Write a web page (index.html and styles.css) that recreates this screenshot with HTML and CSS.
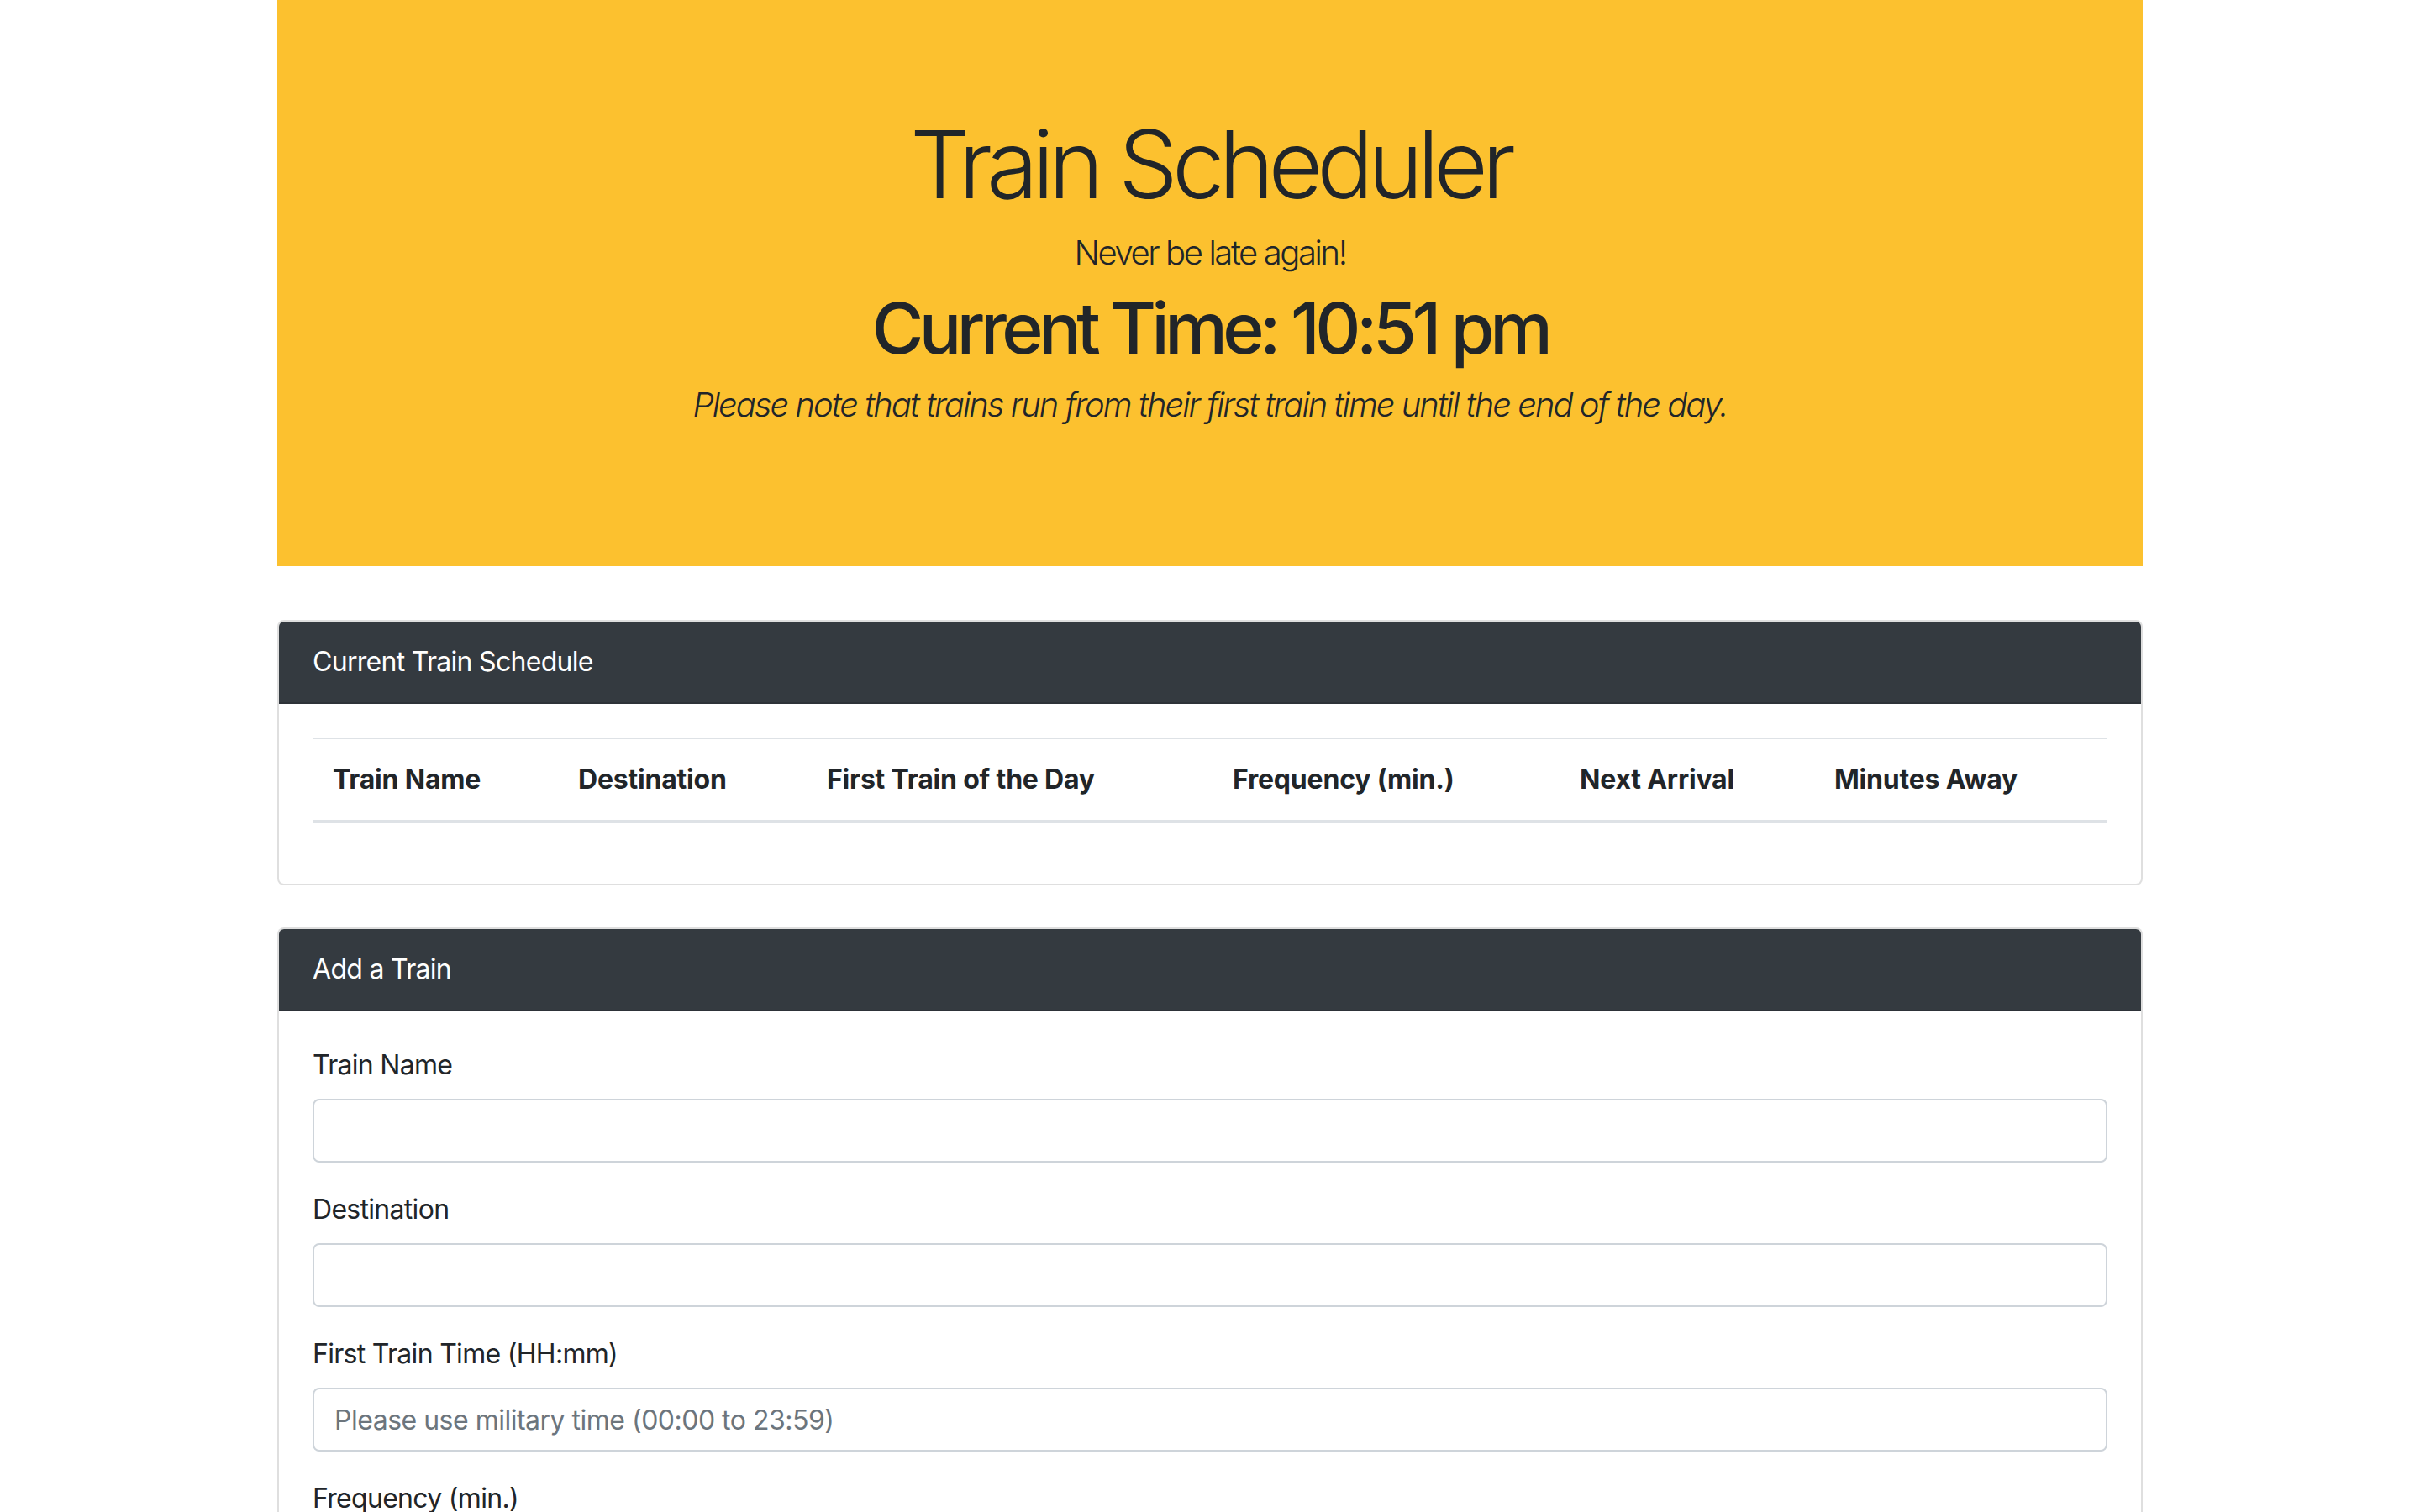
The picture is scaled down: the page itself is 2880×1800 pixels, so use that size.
FILE: index.html
```html
<!DOCTYPE html>
<html lang="en">
<head>
<meta charset="utf-8">
<title>Train Scheduler</title>
<link rel="stylesheet" href="styles.css">
</head>
<body>
<div class="container">
  <header class="hero">
    <h1 class="hero-title">Train Scheduler</h1>
    <p class="hero-lead">Never be late again!</p>
    <h2 class="hero-time">Current Time: 10:51 pm</h2>
    <p class="hero-note">Please note that trains run from their first train time until the end of the day.</p>
  </header>

  <section class="card card-schedule">
    <div class="card-header">Current Train Schedule</div>
    <div class="card-body">
      <table class="schedule">
        <thead>
          <tr>
            <th class="col-name">Train Name</th>
            <th class="col-dest">Destination</th>
            <th class="col-first">First Train of the Day</th>
            <th class="col-freq">Frequency (min.)</th>
            <th class="col-next">Next Arrival</th>
            <th class="col-away">Minutes Away</th>
          </tr>
        </thead>
        <tbody></tbody>
      </table>
    </div>
  </section>

  <section class="card card-form">
    <div class="card-header">Add a Train</div>
    <div class="card-body">
      <form class="train-form">
        <div class="form-group">
          <label class="form-label" for="train-name">Train Name</label>
          <input class="form-control" id="train-name" type="text">
        </div>
        <div class="form-group">
          <label class="form-label" for="destination">Destination</label>
          <input class="form-control" id="destination" type="text">
        </div>
        <div class="form-group">
          <label class="form-label" for="first-train">First Train Time (HH:mm)</label>
          <input class="form-control" id="first-train" type="text" placeholder="Please use military time (00:00 to 23:59)">
        </div>
        <div class="form-group">
          <label class="form-label" for="frequency">Frequency (min.)</label>
          <input class="form-control" id="frequency" type="text">
        </div>
        <button class="btn-submit" type="button">Submit</button>
      </form>
    </div>
  </section>
</div>
</body>
</html>
```
FILE: styles.css
```css
* { box-sizing: border-box; }

html, body {
  margin: 0;
  padding: 0;
}

body {
  background: #ffffff;
  color: #212529;
  font-family: Inter, "Noto Sans", "Liberation Sans", sans-serif;
  font-size: 32px;
  line-height: 1.5;
  letter-spacing: -0.7px;
}

.container {
  width: 2220px;
  margin: 0 auto;
}

/* Hero / jumbotron */
.hero {
  background: #fcc12f;
  padding: 128px 64px 162px;
  margin-bottom: 64px;
  text-align: center;
}

.hero-title {
  margin: 0 0 9px;
  font-size: 112px;
  font-weight: 300;
  line-height: 1.2;
  letter-spacing: -7px;
}

.hero-lead {
  margin: 0 0 10px;
  font-size: 40px;
  font-weight: 300;
  line-height: 1.5;
  letter-spacing: -2.4px;
}

.hero-time {
  margin: 0 0 10px;
  font-size: 84px;
  font-weight: 500;
  line-height: 1.2;
  letter-spacing: -5.5px;
}

.hero-note {
  margin: 0;
  font-size: 40px;
  font-weight: 300;
  font-style: italic;
  line-height: 1.5;
  letter-spacing: -2px;
}

/* Cards */
.card {
  border: 2px solid rgba(0, 0, 0, 0.125);
  border-radius: 8px;
  background: #ffffff;
  overflow: hidden;
}

.card-schedule {
  margin-bottom: 50px;
}

.card-header {
  background: #343a40;
  color: #ffffff;
  padding: 24px 40px;
  line-height: 48px;
  border-bottom: 2px solid rgba(0, 0, 0, 0.125);
}

.card-body {
  padding: 40px;
}

/* Schedule table */
.schedule {
  width: 100%;
  border-collapse: collapse;
  table-layout: fixed;
  margin-bottom: 32px;
}

.schedule th {
  padding: 24px;
  text-align: left;
  font-weight: 700;
  line-height: 48px;
  letter-spacing: -0.2px;
  vertical-align: bottom;
  border-top: 2px solid #dee2e6;
  border-bottom: 4px solid #dee2e6;
  white-space: nowrap;
}

.col-name { width: 292px; }
.col-dest { width: 296px; }
.col-first { width: 483px; }
.col-freq { width: 413px; }
.col-next { width: 303px; }
.col-away { width: auto; }

/* Form */
.form-group {
  margin-bottom: 32px;
}

.form-label {
  display: block;
  margin-bottom: 16px;
  line-height: 48px;
}

.form-control {
  display: block;
  width: 100%;
  height: 76px;
  padding: 12px 24px;
  font-family: inherit;
  font-size: 32px;
  line-height: 48px;
  letter-spacing: -0.5px;
  color: #495057;
  background: #ffffff;
  border: 2px solid #ced4da;
  border-radius: 8px;
  outline: none;
}

.form-control::placeholder {
  color: #6c757d;
  opacity: 1;
}

.btn-submit {
  font-family: inherit;
  font-size: 32px;
  line-height: 48px;
  padding: 12px 24px;
  color: #ffffff;
  background: #343a40;
  border: 2px solid #343a40;
  border-radius: 8px;
}
```
